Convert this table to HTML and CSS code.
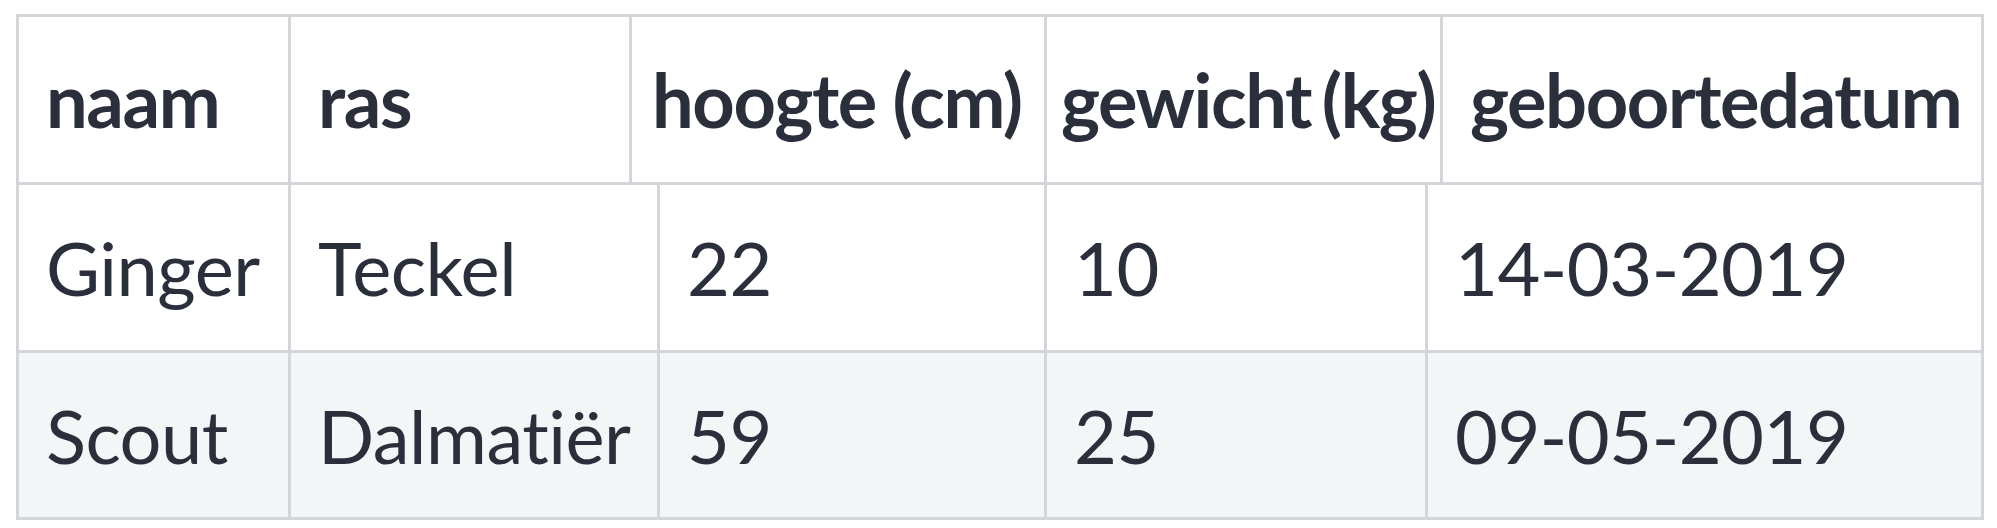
FILE: index.html
```html
<!DOCTYPE html>
<html lang="nl">
<head>
<meta charset="utf-8">
<title>Honden</title>
<link rel="stylesheet" href="styles.css">
</head>
<body>
<div class="table">
  <div class="row head">
    <div class="cell">naam</div>
    <div class="cell">ras</div>
    <div class="cell c3">hoogte (cm)</div>
    <div class="cell c4">gewicht (kg)</div>
    <div class="cell">geboortedatum</div>
  </div>
  <div class="row body">
    <div class="cell">Ginger</div>
    <div class="cell">Teckel</div>
    <div class="cell">22</div>
    <div class="cell">10</div>
    <div class="cell">14-03-2019</div>
  </div>
  <div class="row body alt">
    <div class="cell">Scout</div>
    <div class="cell">Dalmatiër</div>
    <div class="cell">59</div>
    <div class="cell">25</div>
    <div class="cell">09-05-2019</div>
  </div>
</div>
</body>
</html>
```
FILE: styles.css
```css
html, body {
  margin: 0;
  padding: 0;
  background: #ffffff;
}
body {
  font-family: Lato, "Open Sans", sans-serif;
  color: #2b2f3b;
  padding: 14px 0 0 16px;
}
.table {
  width: 1968px;
  box-sizing: border-box;
  border: 3px solid #d3d5da;
}
.row {
  display: grid;
}
.row + .row {
  border-top: 3px solid #d3d5da;
}
.head {
  grid-template-columns: 269px 341px 415px 396px 541px;
  font-weight: 700;
  letter-spacing: -1.4px;
}
.body {
  grid-template-columns: 269px 369px 387px 381px 556px;
  letter-spacing: -0.5px;
}
.alt {
  background: #f3f5f7;
}
.cell {
  font-size: 74px;
  line-height: 1.2;
  padding: 39px 0 37px 27px;
  white-space: nowrap;
  overflow: hidden;
}
.cell + .cell {
  border-left: 3px solid #d3d5da;
}
.head .c3 {
  padding-left: 20px;
}
.head .c4 {
  padding-left: 14px;
  word-spacing: -6px;
}
```
